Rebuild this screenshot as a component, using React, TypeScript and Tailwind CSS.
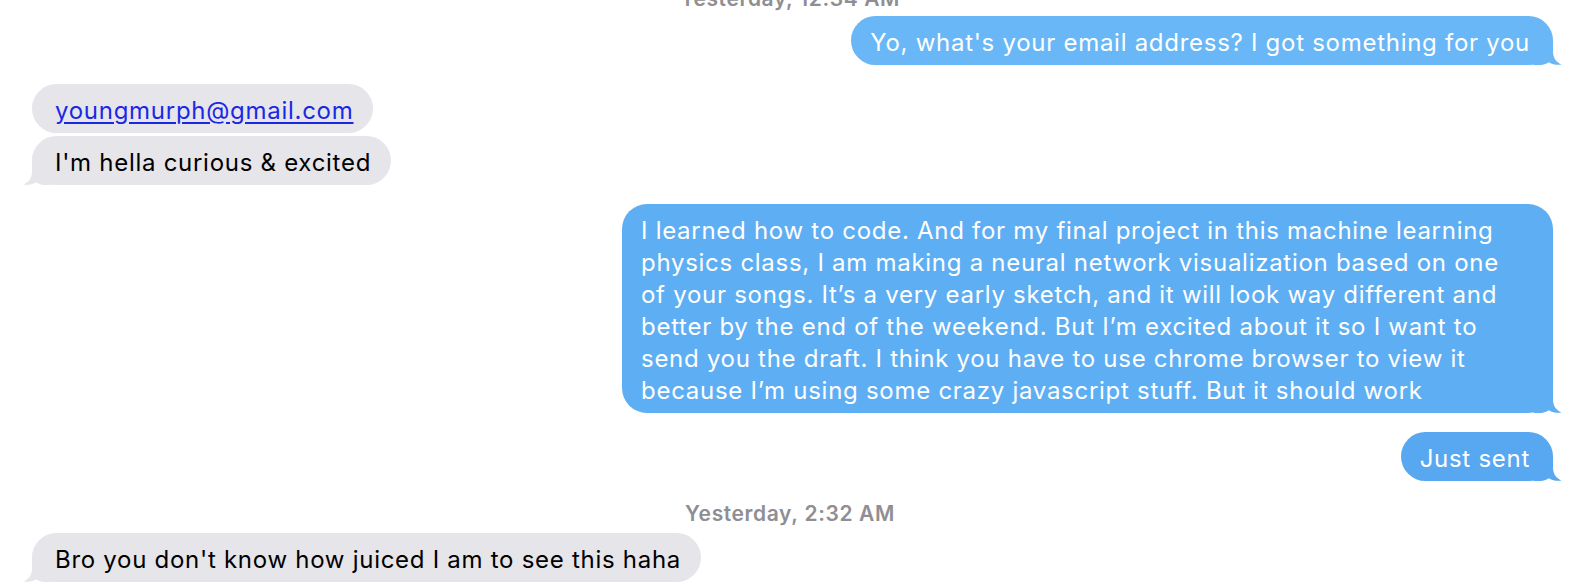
import React from "react";

/* iMessage thread — sent bubbles right in blue, received left in grey. */

const font = { fontFamily: "Inter, 'Noto Sans', sans-serif" };

function TailRight({ color }: { color: string }) {
  return (
    <svg
      className="absolute -right-[9px] bottom-0 h-[24px] w-[28px]"
      viewBox="0 0 28 24"
      aria-hidden
    >
      <path
        d="M0 0 H19 V10 C19 17 22 21 27.5 23.6 C23 24.4 18.5 23.4 15 21.2 C12 23.2 8 24 4 24 H0 Z"
        fill={color}
      />
    </svg>
  );
}

function TailLeft({ color }: { color: string }) {
  return (
    <svg
      className="absolute -left-[9px] bottom-0 h-[24px] w-[28px]"
      viewBox="0 0 28 24"
      aria-hidden
    >
      <path
        d="M28 0 H9 V10 C9 17 6 21 0.5 23.6 C5 24.4 9.5 23.4 13 21.2 C16 23.2 20 24 24 24 H28 Z"
        fill={color}
      />
    </svg>
  );
}

function Sent({
  children,
  tail,
  color,
  className = "",
}: {
  children: React.ReactNode;
  tail?: boolean;
  color: string;
  className?: string;
}) {
  return (
    <div className="flex justify-end pr-[21px]">
      <div
        className={`relative rounded-[25px] pt-[10.5px] pb-[6.5px] pl-[19px] pr-[23px] text-[24px] leading-[32px] tracking-[0.72px] text-white ${className}`}
        style={{ background: color }}
      >
        {children}
        {tail && <TailRight color={color} />}
      </div>
    </div>
  );
}

function Received({
  children,
  tail,
}: {
  children: React.ReactNode;
  tail?: boolean;
}) {
  return (
    <div className="flex justify-start pl-[32px]">
      <div className="relative rounded-[25px] bg-[#e5e5ea] pt-[10.5px] pb-[6.5px] pl-[23px] pr-[20px] text-[24px] leading-[32px] tracking-[0.72px] text-black">
        {children}
        {tail && <TailLeft color="#e5e5ea" />}
      </div>
    </div>
  );
}

function Stamp({ day, time }: { day: string; time: string }) {
  return (
    <div className="flex h-[24px] items-center justify-center pl-[6px] text-[21px] font-semibold leading-[24px] tracking-[0.6px] text-[#8e8e93]">
      <span>{day}</span>
      <span className="ml-[6px]">{time}</span>
    </div>
  );
}

const longLines = [
  "I learned how to code. And for my final project in this machine learning",
  "physics class, I am making a neural network visualization based on one",
  "of your songs. It\u2019s a very early sketch, and it will look way different and",
  "better by the end of the weekend. But I\u2019m excited about it so I want to",
  "send you the draft. I think you have to use chrome browser to view it",
  "because I\u2019m using some crazy javascript stuff. But it should work",
];

export default function App() {
  return (
    <div className="h-[584px] overflow-hidden bg-white" style={font}>
      <div className="-mt-[13px]">
        <Stamp day="Yesterday," time="12:34 AM" />
      </div>

      <div className="mt-[5px]">
        <Sent tail color="#69b7f6">
          Yo, what's your email address? I got something for you
        </Sent>
      </div>

      <div className="mt-[19px] flex flex-col gap-[3px]">
        <Received>
          <span className="text-[#1a28e6] underline decoration-[1.5px] underline-offset-[3px]">
            youngmurph@gmail.com
          </span>
        </Received>
        <Received tail>I'm hella curious &amp; excited</Received>
      </div>

      <div className="mt-[19px]">
        <Sent tail color="#5eaef4" className="w-[931px]">
          {longLines.map((l) => (
            <span key={l} className="block whitespace-nowrap">
              {l}
            </span>
          ))}
        </Sent>
      </div>

      <div className="mt-[19px]">
        <Sent tail color="#58a8f1">
          Just sent
        </Sent>
      </div>

      <div className="mt-[21px] mb-[7px]">
        <Stamp day="Yesterday," time="2:32 AM" />
      </div>

      <Received tail>Bro you don't know how juiced I am to see this haha</Received>
    </div>
  );
}
